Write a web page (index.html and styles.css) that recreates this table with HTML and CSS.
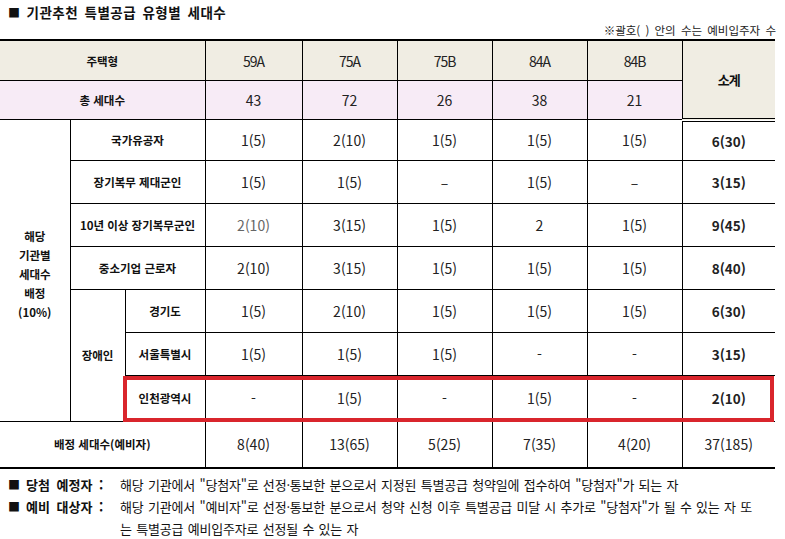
FILE: index.html
```html
<!DOCTYPE html>
<html lang="ko">
<head>
<meta charset="utf-8">
<link rel="stylesheet" href="styles.css">
</head>
<body>
<div class="page">
  <h1 class="title"><span class="sq">■</span>기관추천 특별공급 유형별 세대수</h1>
  <p class="note">※괄호( ) 안의 수는 예비입주자 수</p>
  <div class="table-wrap">
    <table class="grid">
      <colgroup>
        <col class="c-a"><col class="c-b"><col class="c-c">
        <col class="c-n1"><col class="c-n"><col class="c-n"><col class="c-n"><col class="c-n"><col class="c-s">
      </colgroup>
      <thead>
        <tr class="h1">
          <th colspan="3" class="lbl">주택형</th>
          <th class="typ">59A</th><th class="typ">75A</th><th class="typ">75B</th><th class="typ">84A</th><th class="typ">84B</th>
          <th rowspan="2" class="sub">소계</th>
        </tr>
        <tr class="h2">
          <th colspan="3" class="lbl">총 세대수</th>
          <td>43</td><td>72</td><td>26</td><td>38</td><td>21</td>
        </tr>
      </thead>
      <tbody>
        <tr class="r1">
          <th rowspan="7" class="lbl side">해당<br>기관별<br>세대수<br>배정<br>(10%)</th>
          <th colspan="2" class="lbl">국가유공자</th>
          <td>1(5)</td><td>2(10)</td><td>1(5)</td><td>1(5)</td><td>1(5)</td><td class="tot">6(30)</td>
        </tr>
        <tr class="r2">
          <th colspan="2" class="lbl">장기복무 제대군인</th>
          <td>1(5)</td><td>1(5)</td><td>–</td><td>1(5)</td><td>–</td><td class="tot">3(15)</td>
        </tr>
        <tr class="r3">
          <th colspan="2" class="lbl">10년 이상 장기복무군인</th>
          <td class="dim">2(10)</td><td>3(15)</td><td>1(5)</td><td>2</td><td>1(5)</td><td class="tot">9(45)</td>
        </tr>
        <tr class="r4">
          <th colspan="2" class="lbl">중소기업 근로자</th>
          <td>2(10)</td><td>3(15)</td><td>1(5)</td><td>1(5)</td><td>1(5)</td><td class="tot">8(40)</td>
        </tr>
        <tr class="r5">
          <th rowspan="3" class="lbl">장애인</th>
          <th class="lbl">경기도</th>
          <td>1(5)</td><td>2(10)</td><td>1(5)</td><td>1(5)</td><td>1(5)</td><td class="tot">6(30)</td>
        </tr>
        <tr class="r6">
          <th class="lbl">서울특별시</th>
          <td>1(5)</td><td>1(5)</td><td>1(5)</td><td>-</td><td>-</td><td class="tot">3(15)</td>
        </tr>
        <tr class="r7">
          <th class="lbl">인천광역시</th>
          <td>-</td><td>1(5)</td><td>-</td><td>1(5)</td><td>-</td><td class="tot">2(10)</td>
        </tr>
      </tbody>
      <tfoot>
        <tr class="r8">
          <th colspan="3" class="lbl">배정 세대수(예비자)</th>
          <td>8(40)</td><td>13(65)</td><td>5(25)</td><td>7(35)</td><td>4(20)</td><td>37(185)</td>
        </tr>
      </tfoot>
    </table>
    <div class="highlight"></div>
  </div>
  <div class="foot">
    <div class="fn"><span class="fl"><span class="sq">■</span>당첨 예정자 :</span><span class="ft">해당 기관에서 "당첨자"로 선정·통보한 분으로서 지정된 특별공급 청약일에 접수하여 "당첨자"가 되는 자</span></div>
    <div class="fn"><span class="fl"><span class="sq">■</span>예비 대상자 :</span><span class="ft">해당 기관에서 "예비자"로 선정·통보한 분으로서 청약 신청 이후 특별공급 미달 시 추가로 "당첨자"가 될 수 있는 자 또<br>는 특별공급 예비입주자로 선정될 수 있는 자</span></div>
  </div>
</div>
</body>
</html>
```

FILE: styles.css
```css
html, body {
  margin: 0;
  padding: 0;
  background: #ffffff;
}
body {
  font-family: "Noto Sans CJK KR", "Noto Sans", sans-serif;
  color: #111;
}
.page {
  width: 785px;
  height: 539px;
  overflow: hidden;
}
.title {
  margin: 0;
  padding: 2px 0 0 8px;
  height: 20px;
  font-size: 13.5px;
  line-height: 20px;
  font-weight: 700;
  letter-spacing: 0.5px;
  word-spacing: 2px;
  color: #111;
}
.sq {
  display: inline-block;
  font-size: 12px;
  margin-right: 6px;
  font-weight: 400;
}
.note {
  margin: 0;
  padding-right: 9px;
  height: 17px;
  text-align: right;
  font-size: 11.5px;
  line-height: 16px;
  color: #222;
  word-spacing: 2px;
}
.table-wrap {
  position: relative;
  width: 775px;
}
.grid {
  width: 775px;
  table-layout: fixed;
  border-collapse: collapse;
  border-top: 2px solid #000;
  border-bottom: 2px solid #000;
}
.c-a { width: 70px; }
.c-b { width: 55px; }
.c-c { width: 80px; }
.c-n1 { width: 97px; }
.c-n { width: 95px; }
.c-s { width: 93px; }
.grid th, .grid td {
  border: 1px solid #000;
  padding: 0;
  text-align: center;
  vertical-align: middle;
  font-size: 14px;
  font-weight: 400;
  color: #222;
}
.grid tr > :first-child { border-left: none; }
.grid tr > :last-child { border-right: none; }
.grid .sub { border-right: none; }
.grid .lbl {
  font-size: 11.5px;
  font-weight: 700;
  color: #111;
}
.grid .side {
  line-height: 19px;
  padding-top: 8px;
  border-left: none;
}
.grid .typ {
  font-size: 14px;
  letter-spacing: -1px;
  color: #222;
}
.grid .sub {
  font-size: 13px;
  font-weight: 700;
  letter-spacing: -1px;
  color: #111;
  background: #f0ede3;
}
.h1 > * { background: #f0ede3; height: 39px; }
.h2 > * { background: #f7ebf6; height: 38px; border-bottom: 4px double #000; }
.grid thead .sub { border-bottom: 4px double #000; }
.r1 > * { height: 38px; }
.r2 > * { height: 42px; }
.r3 > * { height: 42px; }
.r4 > * { height: 42px; }
.r5 > * { height: 42px; }
.r6 > * { height: 42px; }
.r7 > * { height: 45px; }
.r8 > * { height: 45px; border-top: 4px double #000; }
.grid .tot { font-weight: 700; font-size: 13.5px; }
.grid .dim { color: #666; }
.highlight {
  position: absolute;
  left: 123px;
  top: 337px;
  width: 643px;
  height: 38px;
  border: 4px solid #d9252c;
  pointer-events: none;
}
.foot {
  padding: 5px 0 0 8px;
}
.fn {
  display: flex;
  font-size: 13px;
  line-height: 22px;
  color: #111;
  white-space: nowrap;
}
.fl {
  width: 112px;
  flex: none;
  font-weight: 700;
  word-spacing: 3px;
}
.ft {
  letter-spacing: -0.2px;
  word-spacing: 1px;
}
```
